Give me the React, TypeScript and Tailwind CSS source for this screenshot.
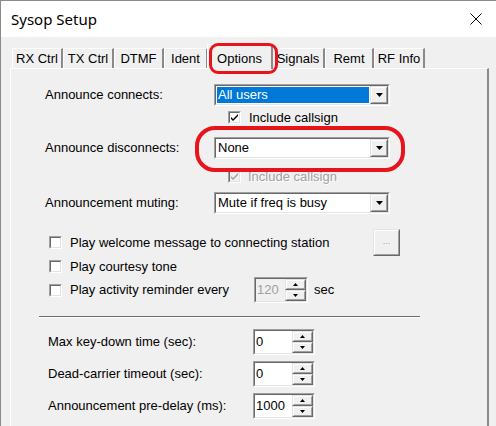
import type { ReactNode } from "react"

const font = { fontFamily: '"Liberation Sans", Arial, sans-serif' }

function Triangle({ up = false, size = "big" }: { up?: boolean; size?: "big" | "small" }) {
    const w = size === "big" ? 7 : 5
    const h = size === "big" ? 4 : 3
    return (
        <svg width={w} height={h} viewBox={`0 0 ${w} ${h}`} className="block">
            <polygon points={up ? `0,${h} ${w},${h} ${w / 2},0` : `0,0 ${w},0 ${w / 2},${h}`} fill="#000" />
        </svg>
    )
}

function Sunken({ className, children }: { className: string; children: ReactNode }) {
    return (
        <div className={`border border-t-[#a0a0a0] border-l-[#a0a0a0] border-b-white border-r-white ${className}`}>
            <div className="flex h-full w-full border border-t-[#696969] border-l-[#696969] border-b-[#e3e3e3] border-r-[#e3e3e3]">
                {children}
            </div>
        </div>
    )
}

function Raised({ className, children }: { className: string; children?: ReactNode }) {
    return (
        <div className={`border border-t-[#e3e3e3] border-l-[#e3e3e3] border-b-[#696969] border-r-[#696969] bg-[#f0f0f0] ${className}`}>
            <div className="flex h-full w-full items-center justify-center border border-t-white border-l-white border-b-[#a0a0a0] border-r-[#a0a0a0]">
                {children}
            </div>
        </div>
    )
}

function Combo({ value, selected = false }: { value: string; selected?: boolean }) {
    return (
        <Sunken className="h-[22px] w-[176px]">
            <div className="flex h-full flex-1 items-center bg-white p-[1px]">
                <div className={`flex h-full flex-1 items-center pl-[1px] ${selected ? "bg-[#0078d7] text-white" : "text-black"}`}>{value}</div>
            </div>
            <Raised className="h-full w-[18px]">
                <Triangle />
            </Raised>
        </Sunken>
    )
}

function Check({ checked = false, disabled = false }: { checked?: boolean; disabled?: boolean }) {
    return (
        <Sunken className="h-[13px] w-[13px] shrink-0">
            <div className={`flex flex-1 items-center justify-center ${disabled ? "bg-[#f0f0f0]" : "bg-white"}`}>
                {checked && (
                    <svg width="7" height="7" viewBox="0 0 7 7">
                        <path d="M0 3 L2 5 L7 0 L7 2 L2 7 L0 5 Z" fill={disabled ? "#a0a0a0" : "#000"} />
                    </svg>
                )}
            </div>
        </Sunken>
    )
}

function Spinner({ value, disabled = false, width }: { value: string; disabled?: boolean; width: string }) {
    return (
        <Sunken className={`h-[26px] ${width}`}>
            <div className={`flex flex-1 items-center pl-[1px] ${disabled ? "bg-[#f0f0f0] text-[#a0a0a0]" : "bg-white text-black"}`}>
                {value}
            </div>
            <div className="flex w-[21px] flex-col bg-white">
                <Raised className="h-1/2 w-full">
                    <Triangle up size="small" />
                </Raised>
                <Raised className="h-1/2 w-full">
                    <Triangle size="small" />
                </Raised>
            </div>
        </Sunken>
    )
}

const tabs = [
    { name: "RX Ctrl", w: "w-[51px]" },
    { name: "TX Ctrl", w: "w-[51px]" },
    { name: "DTMF", w: "w-[50px]" },
    { name: "Ident", w: "w-[44px]" },
    { name: "Options", w: "w-[66px]", active: true },
    { name: "Signals", w: "w-[53px]" },
    { name: "Remt", w: "w-[49px]" },
    { name: "RF Info", w: "w-[51px]" },
]

export default function App() {
    return (
        <div className="relative h-[426px] w-[496px] overflow-hidden border-l border-t border-[#8a8a8a] bg-[#f0f0f0] text-[13px] text-black" style={font}>
            <div className="flex h-[36px] items-center justify-between bg-white pl-[10px] pr-[14px]">
                <span className="text-[15px] text-black" style={{ fontFamily: '"Noto Sans", "Open Sans", sans-serif' }}>
                    Sysop Setup
                </span>
                <svg width="12" height="12" viewBox="0 0 12 12">
                    <path d="M0.5 0.5 L11.5 11.5 M11.5 0.5 L0.5 11.5" stroke="#000" strokeWidth="1" />
                </svg>
            </div>

            <div className="flex h-[31px] items-end pl-[11px]">
                {tabs.map((t) =>
                    t.active ? (
                        <div key={t.name} className={`relative z-10 -mb-[1px] -mx-[1px] flex h-[25px] items-start justify-center rounded-tl-[2px] border-l border-t border-white border-r-2 border-r-[#8a8a8a] bg-[#f0f0f0] pt-[4px] ${t.w}`}>
                            {t.name}
                        </div>
                    ) : (
                        <div key={t.name} className={`flex h-[20px] items-center justify-center rounded-tl-[2px] border-l border-t border-white border-r-2 border-r-[#8a8a8a] ${t.w}`}>
                            {t.name}
                        </div>
                    ),
                )}
            </div>

            <div className="ml-[9px] flex h-[400px] w-[479px] flex-col border-l border-t border-white border-r-2 border-r-[#8a8a8a] pt-[15px]">
                <div className="flex h-[22px] items-center pl-[34px]">
                    <span className="w-[169px]">Announce connects:</span>
                    <Combo value="All users" selected />
                </div>
                <div className="mt-[5px] flex h-[13px] items-center gap-[8px] pl-[217px]">
                    <Check checked />
                    <span>Include callsign</span>
                </div>
                <div className="mt-[13px] flex h-[22px] items-center pl-[34px]">
                    <span className="w-[169px]">Announce disconnects:</span>
                    <Combo value="None" />
                </div>
                <div className="mt-[11px] flex h-[13px] items-center gap-[7px] pl-[217px]">
                    <Check checked disabled />
                    <span className="text-[#a0a0a0] [text-shadow:1px_1px_0_#fff]">Include callsign</span>
                </div>
                <div className="mt-[9px] flex h-[22px] items-center pl-[34px]">
                    <span className="w-[169px]">Announcement muting:</span>
                    <Combo value="Mute if freq is busy" />
                </div>

                <div className="mt-[15px] flex h-[27px] items-center gap-[8px] pl-[38px]">
                    <Check />
                    <span className="w-[295px]">Play welcome message to connecting station</span>
                    <Raised className="h-[27px] w-[27px]">
                        <span className="pb-[2px] text-[9px] text-[#a0a0a0]">...</span>
                    </Raised>
                </div>
                <div className="mt-[4px] flex h-[13px] items-center gap-[8px] pl-[38px]">
                    <Check />
                    <span>Play courtesy tone</span>
                </div>
                <div className="mt-[4px] flex h-[26px] items-center gap-[8px] pl-[38px]">
                    <Check />
                    <span className="w-[176px]">Play activity reminder every</span>
                    <Spinner value="120" disabled width="w-[54px]" />
                    <span className="ml-[-2px]">sec</span>
                </div>

                <div className="ml-[28px] mt-[13px] h-[2px] w-[381px] border-b border-t border-b-white border-t-[#6d6d6d]" />

                <div className="mt-[11px] flex h-[26px] items-center pl-[37px]">
                    <span className="w-[205px]">Max key-down time (sec):</span>
                    <Spinner value="0" width="w-[62px]" />
                </div>
                <div className="mt-[6px] flex h-[26px] items-center pl-[37px]">
                    <span className="w-[205px]">Dead-carrier timeout (sec):</span>
                    <Spinner value="0" width="w-[62px]" />
                </div>
                <div className="mt-[6px] flex h-[26px] items-center pl-[37px]">
                    <span className="w-[205px]">Announcement pre-delay (ms):</span>
                    <Spinner value="1000" width="w-[62px]" />
                </div>
            </div>

            <div className="pointer-events-none absolute left-[208px] top-[42px] z-20 h-[31px] w-[69px] rounded-[9px] border-[3px] border-[#e8141c]" />
            <div className="pointer-events-none absolute left-[194px] top-[125px] z-20 h-[46px] w-[210px] rounded-[20px] border-[4px] border-[#e8141c]" />
        </div>
    )
}
